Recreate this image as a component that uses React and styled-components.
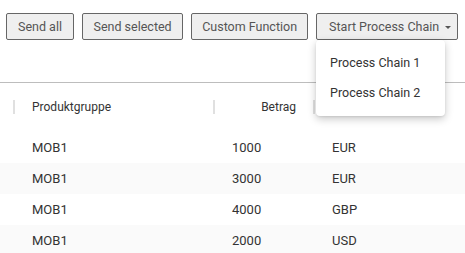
import React from "react";
import styled, { createGlobalStyle } from "styled-components";

const GlobalStyle = createGlobalStyle`
  body {
    margin: 0;
    background: #fff;
    font-family: Roboto, "Liberation Sans", sans-serif;
    overflow: hidden;
  }
`;

const Page = styled.div`
  width: 465px;
  height: 253px;
  overflow: hidden;
`;

const Toolbar = styled.div`
  display: flex;
  gap: 8px;
  padding: 13px 0 0 6px;
  height: 83px;
  box-sizing: border-box;
  border-bottom: 1px solid #bdbdbd;
`;

const Button = styled.button`
  display: flex;
  align-items: center;
  gap: 6px;
  height: 27px;
  padding: ${(p) => (p.$caret ? "0 6px 0 12px" : `0 ${p.$pad || 10}px`)};
  border: 1px solid #666;
  border-radius: 2px;
  background: #efefef;
  color: #555;
  font-family: Roboto, "Liberation Sans", sans-serif;
  font-size: 12.5px;
  white-space: nowrap;
`;

const Caret = styled.span`
  width: 0;
  height: 0;
  margin-top: 2px;
  border-left: 3px solid transparent;
  border-right: 3px solid transparent;
  border-top: 3.5px solid #555;
`;

const DropdownWrap = styled.div`
  position: relative;
`;

const Menu = styled.div`
  position: absolute;
  top: 27px;
  left: 0;
  width: 129px;
  padding: 8px 0;
  background: #fff;
  border-radius: 4px;
  box-shadow: 0 3px 8px rgba(0, 0, 0, 0.22), 0 1px 2px rgba(0, 0, 0, 0.08);
  z-index: 2;
`;

const MenuItem = styled.div`
  height: 30px;
  line-height: 30px;
  padding-left: 14px;
  font-size: 12.5px;
  color: #333;
`;

const Table = styled.div`
  padding-left: 13px;
`;

const Row = styled.div`
  display: grid;
  grid-template-columns: 200px 100px 1fr;
  margin-left: -13px;
  padding-left: 13px;
  height: ${(p) => (p.$header ? 49 : 31)}px;
  align-items: center;
  background: ${(p) => (p.$shade ? "#fafafa" : "#fff")};
  font-size: ${(p) => (p.$header ? 12 : 13)}px;
  color: #333;
`;

const HeadCell = styled.div`
  display: flex;
  align-items: center;
  justify-content: ${(p) => (p.$right ? "space-between" : "flex-start")};
  padding-right: ${(p) => (p.$right ? 17 : 0)}px;
  margin-top: -2px;
`;

const Divider = styled.span`
  width: 2px;
  height: 14px;
  background: #e0e0e0;
  margin-right: 17px;
`;

const Cell = styled.div`
  padding-left: 19px;
`;

const rows = [
  ["MOB1", "1000", "EUR"],
  ["MOB1", "3000", "EUR"],
  ["MOB1", "4000", "GBP"],
  ["MOB1", "2000", "USD"],
];

export default function App() {
  return (
    <Page>
      <GlobalStyle />
      <Toolbar>
        <Button $pad={11}>Send all</Button>
        <Button $pad={10.5}>Send selected</Button>
        <Button>Custom Function</Button>
        <DropdownWrap>
          <Button $caret>
            Start Process Chain
            <Caret />
          </Button>
          <Menu>
            <MenuItem>Process Chain 1</MenuItem>
            <MenuItem>Process Chain 2</MenuItem>
          </Menu>
        </DropdownWrap>
      </Toolbar>
      <Table>
        <Row $header>
          <HeadCell>
            <Divider />
            Produktgruppe
          </HeadCell>
          <HeadCell $right>
            <Divider />
            Betrag
          </HeadCell>
          <HeadCell>
            <Divider />
          </HeadCell>
        </Row>
        {rows.map((r, i) => (
          <Row key={i} $shade={i % 2 === 1}>
            <Cell>{r[0]}</Cell>
            <Cell>{r[1]}</Cell>
            <Cell>{r[2]}</Cell>
          </Row>
        ))}
      </Table>
    </Page>
  );
}
